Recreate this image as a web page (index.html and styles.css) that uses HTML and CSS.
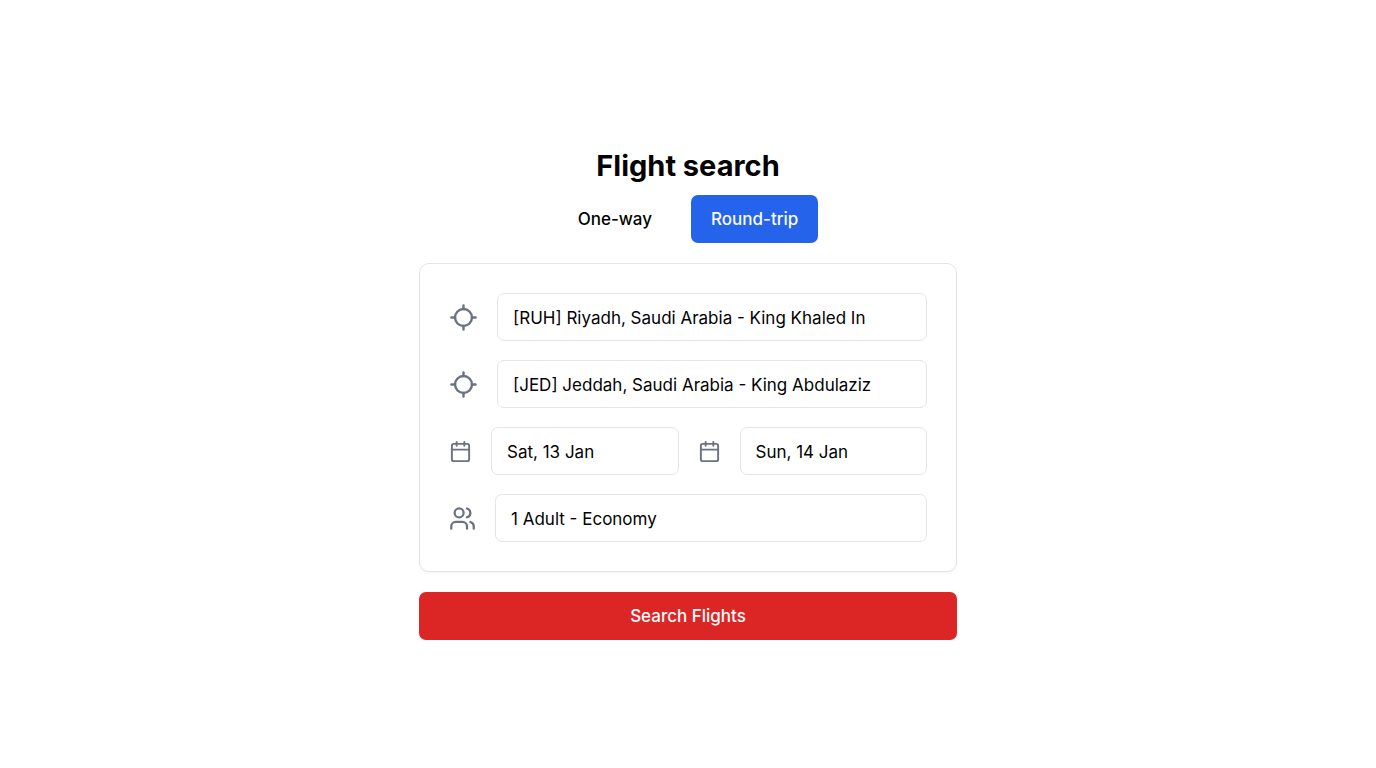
FILE: index.html
```html
<!DOCTYPE html>
<html lang="en">
<head>
  <meta charset="utf-8">
  <meta name="viewport" content="width=device-width, initial-scale=1">
  <title>Flight search</title>
  <link rel="stylesheet" href="styles.css">
</head>
<body>
  <main class="page">
    <form class="search">
      <h1 class="title">Flight search</h1>
      <div class="tabs">
        <button class="button" type="button" aria-pressed="false">One-way</button>
        <button class="button button-active" type="button" aria-pressed="true">Round-trip</button>
      </div>
      <div class="card">
        <div class="row">
          <label class="label" for="origin" aria-label="From">
            <svg class="icon icon-large" viewBox="0 0 24 24"><path d="M2 12h3M19 12h3M12 2v3M12 19v3"/><circle cx="12" cy="12" r="7"/></svg>
          </label>
          <input class="field" id="origin" type="text" value="[RUH] Riyadh, Saudi Arabia - King Khaled In">
        </div>
        <div class="row">
          <label class="label" for="destination" aria-label="To">
            <svg class="icon icon-large" viewBox="0 0 24 24"><path d="M2 12h3M19 12h3M12 2v3M12 19v3"/><circle cx="12" cy="12" r="7"/></svg>
          </label>
          <input class="field" id="destination" type="text" value="[JED] Jeddah, Saudi Arabia - King Abdulaziz">
        </div>
        <div class="row">
          <label class="label" for="depart" aria-label="Departure date">
            <svg class="icon icon-small" viewBox="0 0 24 24"><rect x="3" y="4" width="18" height="18" rx="2"/><path d="M16 2v4M8 2v4M3 10h18"/></svg>
          </label>
          <input class="field" id="depart" type="text" value="Sat, 13 Jan">
          <label class="label" for="return" aria-label="Return date">
            <svg class="icon icon-small" viewBox="0 0 24 24"><rect x="3" y="4" width="18" height="18" rx="2"/><path d="M16 2v4M8 2v4M3 10h18"/></svg>
          </label>
          <input class="field" id="return" type="text" value="Sun, 14 Jan">
        </div>
        <div class="row">
          <label class="label" for="travellers" aria-label="Travellers and class">
            <svg class="icon icon-medium" viewBox="0 0 24 24"><path d="M16 21v-2a4 4 0 0 0-4-4H6a4 4 0 0 0-4 4v2"/><circle cx="9" cy="7" r="4"/><path d="M22 21v-2a4 4 0 0 0-3-3.87M16 3.13a4 4 0 0 1 0 7.75"/></svg>
          </label>
          <input class="field" id="travellers" type="text" value="1 Adult - Economy">
        </div>
      </div>
      <button class="button button-submit" type="submit">Search Flights</button>
    </form>
  </main>
</body>
</html>
```
FILE: styles.css
```css
* {
  box-sizing: border-box;
}

body {
  margin: 0;
  background: #fff;
  color: #020202;
  font-family: Inter, "Liberation Sans", sans-serif;
  font-size: 17px;
  line-height: 24px;
}

.page {
  display: flex;
  align-items: center;
  justify-content: center;
  min-height: 100vh;
}

.search {
  display: flex;
  flex-direction: column;
  width: 100%;
  max-width: 538px;
  padding-top: 19px;
}

.title {
  margin: 0 0 10px;
  font-size: 29px;
  font-weight: 700;
  line-height: 38px;
  text-align: center;
}

.tabs {
  display: flex;
  justify-content: center;
  gap: 19px;
}

.button {
  padding: 12px 20px;
  border: 0;
  border-radius: 7px;
  background: transparent;
  color: inherit;
  font: inherit;
  font-weight: 500;
  cursor: pointer;
}

.button-active {
  background: #2563eb;
  color: #f8fafc;
}

.button-submit {
  background: #dc2626;
  color: #f8fafc;
}

.card {
  display: flex;
  flex-direction: column;
  gap: 19px;
  margin: 20px 0;
  padding: 29px;
  border: 1px solid #e5e5e7;
  border-radius: 10px;
  box-shadow: 0 1px 2px rgb(0 0 0 / 6%);
}

.row {
  display: flex;
  align-items: center;
  gap: 19px;
}

.label {
  display: flex;
  flex: none;
}

.icon {
  fill: none;
  stroke: #6b7280;
  stroke-width: 2;
  stroke-linecap: round;
  stroke-linejoin: round;
}

.icon-large {
  width: 29px;
  height: 29px;
}

.icon-medium {
  width: 27px;
  height: 27px;
}

.icon-small {
  width: 23px;
  height: 23px;
}

.field {
  flex: 1;
  min-width: 0;
  height: 48px;
  padding: 2px 15px 0;
  border: 1px solid #e5e5e7;
  border-radius: 7px;
  background: transparent;
  color: inherit;
  font: inherit;
}
```
